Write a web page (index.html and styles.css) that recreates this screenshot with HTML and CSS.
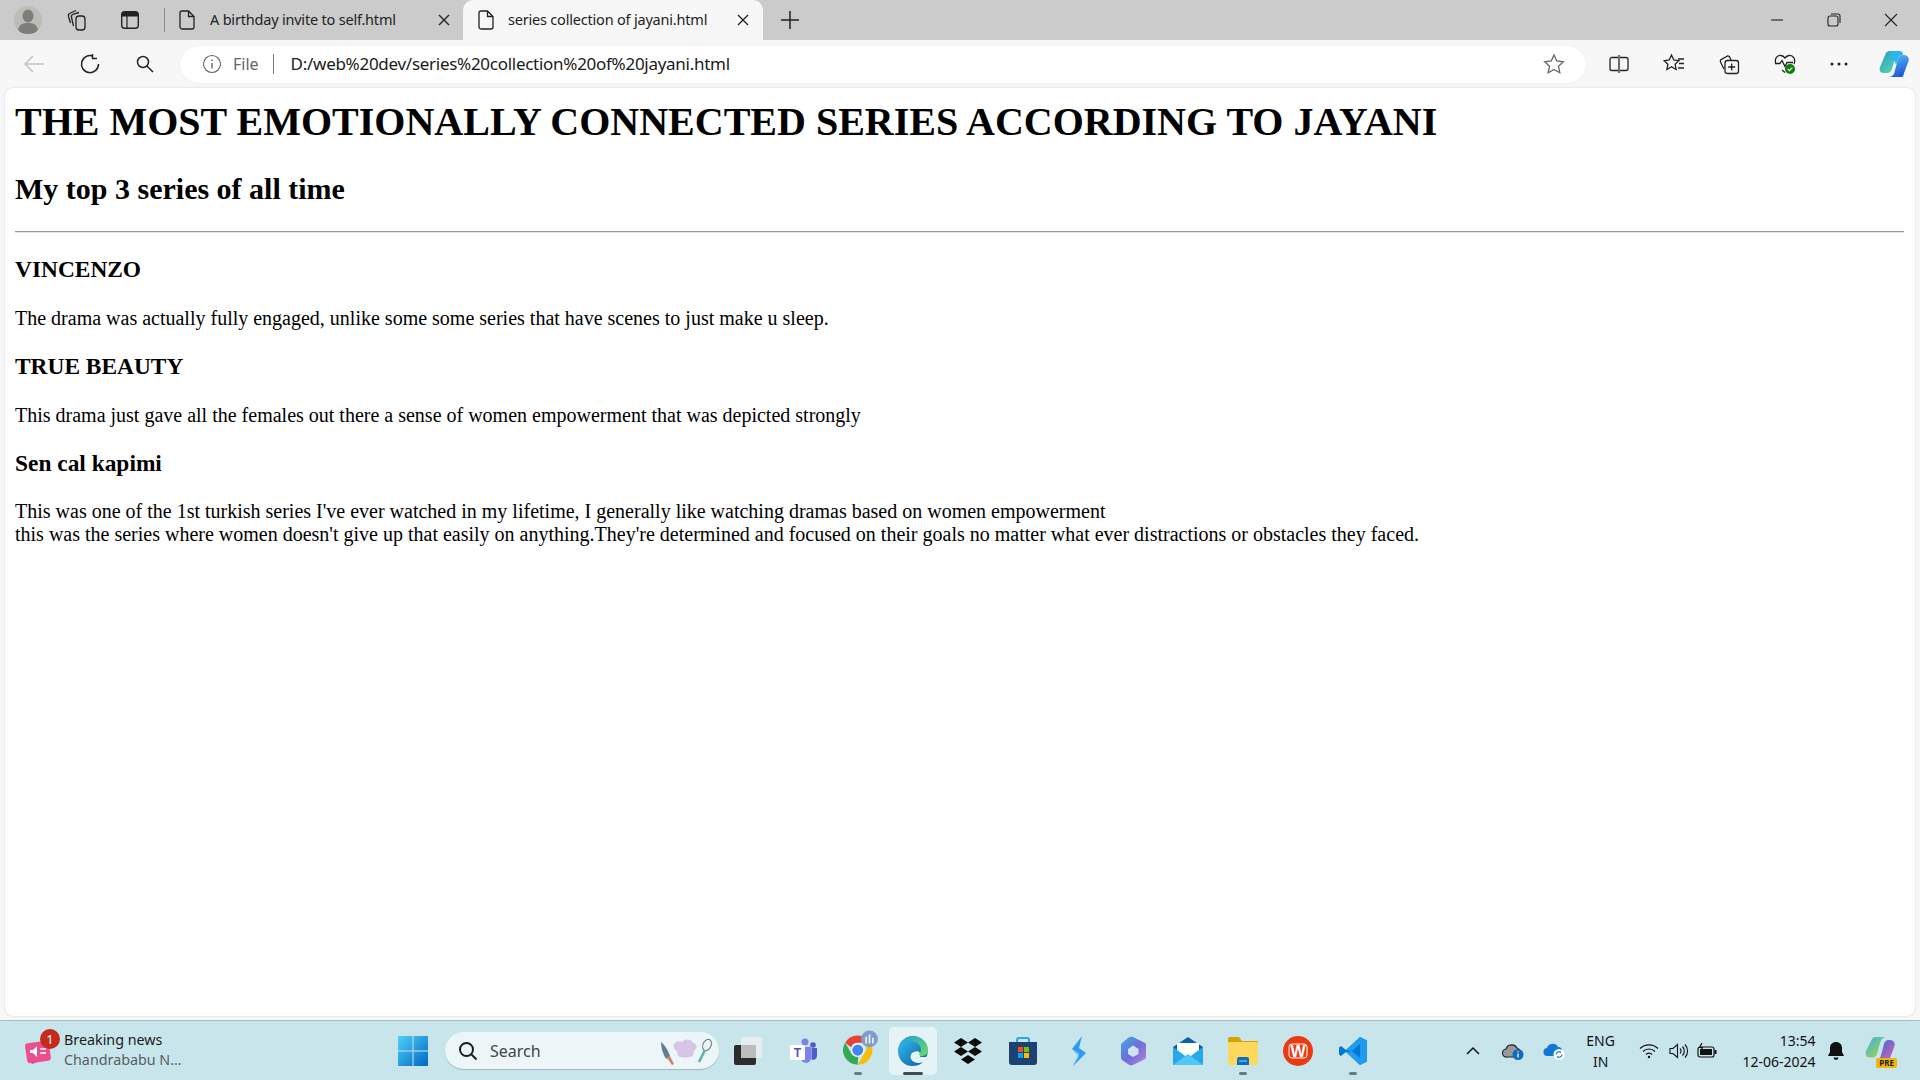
FILE: index.html
```html
<!DOCTYPE html>
<html lang="en">
<head>
<meta charset="utf-8">
<title>series collection of jayani.html</title>
<link rel="stylesheet" href="styles.css">
</head>
<body>
<div class="app">
  <header class="tabstrip">
    <svg class="ic profile" width="30" height="30" viewBox="0 0 30 30"><circle cx="15" cy="15" r="14" fill="#bdbdb8"/><ellipse cx="15" cy="11" rx="5.500" ry="6.500" fill="#7d7d7a"/><path d="M5 25c1-6 5-7 10-7s9 1 10 7c-3 3-6 4-10 4s-7-1-10-4z" fill="#7d7d7a"/></svg>
    <svg class="ic workspaces" width="22" height="22" viewBox="0 0 22 22" fill="none" stroke="#222" stroke-width="1.300"><rect x="10" y="7" width="9" height="14" rx="3"/><path d="M7.500 17 5.500 8.500C5 6.500 6 5.500 7.500 5L13 3.500M4.500 14 2.500 7.500C2 5.500 3 4.500 4.500 4L10 1.500"/></svg>
    <svg class="ic vtabs" width="20" height="20" viewBox="0 0 20 20"><rect x="1.700" y="1.700" width="16.600" height="16.600" rx="3" fill="none" stroke="#222" stroke-width="1.400"/><path d="M2 4a2 2 0 0 1 2-2h12a2 2 0 0 1 2 2v2.500H2z" fill="#222"/><path d="M7 6v12" stroke="#222" stroke-width="1.200"/></svg>
    <span class="divider"></span>
    <div class="tab">
      <svg class="ic" width="16" height="20" viewBox="0 0 16 20" fill="none" stroke="#222" stroke-width="1.300"><path d="M3 1h6.500L15 6.500V17a2 2 0 0 1-2 2H3a2 2 0 0 1-2-2V3a2 2 0 0 1 2-2zM9.500 1v5.500H15"/></svg>
      <span class="tab-title">A birthday invite to self.html</span>
      <svg class="ic" width="12" height="12" viewBox="0 0 12 12" stroke="#222" stroke-width="1.400"><path d="M1 1l10 10M11 1 1 11"/></svg>
    </div>
    <div class="tab active">
      <svg class="ic" width="16" height="20" viewBox="0 0 16 20" fill="none" stroke="#222" stroke-width="1.300"><path d="M3 1h6.500L15 6.500V17a2 2 0 0 1-2 2H3a2 2 0 0 1-2-2V3a2 2 0 0 1 2-2zM9.500 1v5.500H15"/></svg>
      <span class="tab-title">series collection of jayani.html</span>
      <svg class="ic" width="12" height="12" viewBox="0 0 12 12" stroke="#222" stroke-width="1.400"><path d="M1 1l10 10M11 1 1 11"/></svg>
    </div>
    <svg class="ic newtab" width="20" height="20" viewBox="0 0 20 20" stroke="#222" stroke-width="1.500"><path d="M10 1v18M1 10h18"/></svg>
    <div class="winctl">
      <svg class="ic" width="14" height="14" viewBox="0 0 14 14" stroke="#222" stroke-width="1.100"><path d="M1 7h12"/></svg>
      <svg class="ic" width="14" height="14" viewBox="0 0 14 14" fill="none" stroke="#222" stroke-width="1.100"><rect x="1" y="3" width="10" height="10" rx="2"/><path d="M4 1h7a2 2 0 0 1 2 2v7"/></svg>
      <svg class="ic" width="14" height="14" viewBox="0 0 14 14" stroke="#222" stroke-width="1.100"><path d="M1 1l12 12M13 1 1 13"/></svg>
    </div>
  </header>

  <nav class="toolbar">
    <svg class="ic back" width="22" height="20" viewBox="0 0 22 20" fill="none" stroke="#c3c3c3" stroke-width="1.500"><path d="M21 10H2M10 2l-8 8 8 8"/></svg>
    <svg class="ic reload" width="22" height="22" viewBox="0 0 22 22" fill="none" stroke="#222" stroke-width="1.500"><path d="M14 3.200A8.500 8.500 0 1 0 19.500 11M13.500 1v4.500H18"/></svg>
    <svg class="ic zoomglass" width="18" height="18" viewBox="0 0 18 18" fill="none" stroke="#222" stroke-width="1.500"><circle cx="7" cy="7" r="5.500"/><path d="m11 11 6 6"/></svg>
    <div class="address">
      <svg class="ic" width="20" height="20" viewBox="0 0 20 20" fill="none" stroke="#666" stroke-width="1.100"><circle cx="10" cy="10" r="8.500"/><path d="M10 9v5.500M10 5.500v1.500" stroke-width="1.400"/></svg>
      <span class="file-label">File</span>
      <span class="addr-sep"></span>
      <span class="url">D:/web%20dev/series%20collection%20of%20jayani.html</span>
      <svg class="ic star" width="22" height="22" viewBox="0 0 22 22" fill="none" stroke="#666" stroke-width="1.300"><path d="m11 2 2.800 6 6.500.8-4.800 4.500 1.300 6.500L11 16.500 5.200 19.800l1.300-6.500L1.700 8.800 8.200 8z"/></svg>
    </div>
    <div class="tools">
      <svg class="ic" width="20" height="20" viewBox="0 0 20 20" fill="none" stroke="#222" stroke-width="1.300"><path d="M9 3.500H3a2 2 0 0 0-2 2v9a2 2 0 0 0 2 2h6M11 3.500h6a2 2 0 0 1 2 2v9a2 2 0 0 1-2 2h-6M10 1v18"/></svg>
      <svg class="ic" width="22" height="22" viewBox="0 0 22 22" fill="none" stroke="#222" stroke-width="1.300"><path d="m8.500 2 2.300 5 5 .7-3.700 3.500 1 5.300-4.600-2.700L3.900 16.500l1-5.300L1.200 7.700l5-.7zM15 6h6M16 10.500h5M15 15h6"/></svg>
      <svg class="ic" width="22" height="22" viewBox="0 0 22 22" fill="none" stroke="#222" stroke-width="1.300"><path d="M6 16 2.500 9a2 2 0 0 1 1-2.700L9 3.200a2 2 0 0 1 2.700.9L13 7"/><rect x="7" y="7.500" width="13.500" height="13" rx="2.500"/><path d="M13.700 10.500v7M10.200 14h7"/></svg>
      <svg class="ic" width="24" height="22" viewBox="0 0 24 22"><path d="M12 19.500 9 17M3 11C1 6 4 2 8 2.500c2 .2 3 1.200 4 2.500 1-1.300 2-2.300 4-2.500 4-.5 7 3.500 5 8.500M2 10.500h5l2-3 3 6 2-4h6" fill="none" stroke="#222" stroke-width="1.300"/><circle cx="17" cy="16" r="5" fill="#107c10"/><path d="m14.800 16 1.600 1.600 2.900-3" fill="none" stroke="#fff" stroke-width="1.200"/></svg>
      <svg class="ic" width="18" height="6" viewBox="0 0 18 6" fill="#222"><circle cx="2" cy="3" r="1.500"/><circle cx="9" cy="3" r="1.500"/><circle cx="16" cy="3" r="1.500"/></svg>
      <svg class="ic" width="30" height="28" viewBox="0 0 30 28"><defs><linearGradient id="cpa" x1="0" y1="0" x2=".8" y2="1"><stop offset="0" stop-color="#1c9ad6"/><stop offset="1" stop-color="#5fdca0"/></linearGradient><linearGradient id="cpb" x1="0" y1="0" x2=".4" y2="1"><stop offset="0" stop-color="#5cc6f6"/><stop offset="1" stop-color="#1f58d8"/></linearGradient></defs><path d="M7 3c1-1.500 2.500-2 5-2h9c-3 1-4 3-5 7l-3 11c-.7 2.500-2.500 4-5 4H4.500C1 23 0 20 1 17z" fill="url(#cpa)"/><path d="M23 27H11c3-1 4.500-3 5-7l3-11c.6-2 2-4 5-4 4 0 6.500 2 5.500 6L25 23c-.5 2.500-1 4-2 4z" fill="url(#cpb)"/><path d="M12 1h9c1.500 0 3 1.500 3 4-3 0-4.500 1.500-5 4l-2 6c-.5-3-2-5.500-4-5.500-1.500 0-2-.5-1.500-2z" fill="#31b3ee"/></svg>
    </div>
  </nav>

  <main class="page">
    <h1>THE MOST EMOTIONALLY CONNECTED SERIES ACCORDING TO JAYANI</h1>
    <h2>My top 3 series of all time</h2>
    <hr>
    <h3>VINCENZO</h3>
    <p>The drama was actually fully engaged, unlike some some series that have scenes to just make u sleep.</p>
    <h3>TRUE BEAUTY</h3>
    <p>This drama just gave all the females out there a sense of women empowerment that was depicted strongly</p>
    <h3>Sen cal kapimi</h3>
    <p>This was one of the 1st turkish series I've ever watched in my lifetime, I generally like watching dramas based on women empowerment<br>this was the series where women doesn't give up that easily on anything.They're determined and focused on their goals no matter what ever distractions or obstacles they faced.</p>
  </main>

  <footer class="taskbar">
    <div class="news">
      <div class="news-icon">
        <svg width="28" height="30" viewBox="0 0 28 30"><path d="M3 14 20 8l4 14-16 6z" fill="#7a4fd6"/><rect x="2" y="6" width="24" height="20" rx="3" fill="#ec4f8d" transform="rotate(-8 14 16)"/><path d="M6 14h3l4-4v11l-4-4H6z" fill="#fff"/><path d="M16 13h6M16 17h6" stroke="#fff" stroke-width="1.600"/></svg>
        <span class="badge">1</span>
      </div>
      <div class="news-text">
        <span class="news-title">Breaking news</span>
        <span class="news-sub">Chandrababu N...</span>
      </div>
    </div>
    <svg class="ic start" width="30" height="30" viewBox="0 0 30 30"><defs><linearGradient id="win" x1="0" y1="0" x2="1" y2="1"><stop offset="0" stop-color="#4fd0fb"/><stop offset="1" stop-color="#0067c0"/></linearGradient></defs><path d="M0 0h14.500v14.500H0zM15.500 0H30v14.500H15.500zM0 15.500h14.500V30H0zM15.500 15.500H30V30H15.500z" fill="url(#win)"/></svg>
    <div class="search">
      <svg class="ic" width="20" height="20" viewBox="0 0 20 20" fill="none" stroke="#1c1c1c" stroke-width="2"><circle cx="8.500" cy="8.500" r="6.500"/><path d="m13.500 13.500 5 5"/></svg>
      <span class="search-label">Search</span>
      <svg class="ic search-art" width="54" height="30" viewBox="0 0 54 30"><path d="M2 6c3 2 7 8 9 14l-4 3C4 18 2 12 2 6z" fill="#5e7f92"/><path d="m8 22 3-2 4 8-2 1z" fill="#c9875a"/><path d="M15 12c-2-6 5-8 8-6 3-4 10-3 11 1 4 0 5 6 1 8l-1 5c-5 2-11 2-15 0l-1-5c-1 0-2-1-3-3z" fill="#d6c6e6"/><ellipse cx="48" cy="9" rx="4" ry="6" transform="rotate(25 48 9)" fill="#eef4f6" stroke="#6a7a80"/><path d="m46 14-6 12" stroke="#57b3a0" stroke-width="2.500"/></svg>
    </div>
    <div class="apps">
      <div class="app-slot">
        <svg width="30" height="30" viewBox="0 0 30 30"><rect x="1" y="9" width="22" height="20" rx="2" fill="#2b2b2b"/><rect x="8" y="1" width="21" height="21" rx="2" fill="#e9eef0" fill-opacity=".9"/><rect x="8" y="9" width="15" height="13" fill="#bcbcbc"/></svg>
        <span class="run none"></span>
      </div>
      <div class="app-slot">
        <svg width="30" height="30" viewBox="0 0 30 30"><circle cx="17" cy="6" r="3.500" fill="#7b83eb"/><circle cx="25" cy="9" r="2.800" fill="#5059c9"/><path d="M13 11h10v11a5 5 0 0 1-10 0z" fill="#7b83eb"/><path d="M23.500 12H29v8a4 4 0 0 1-5.500 3.500z" fill="#5059c9"/><rect x="2" y="9" width="15" height="15" fill="#fff"/><text x="9.500" y="21" class="teams-t">T</text></svg>
        <span class="run none"></span>
      </div>
      <div class="app-slot">
        <svg class="chrome" width="38" height="38" viewBox="0 0 34 34"><path d="M15 5a13 13 0 0 1 11.300 6.500H15a6.500 6.500 0 0 0-6 4L3.700 11.300A13 13 0 0 1 15 5z" fill="#ea4335"/><path d="M26.300 11.500A13 13 0 0 1 15 31l5.600-9.700a6.500 6.500 0 0 0 .4-9.800z" fill="#fbbc04"/><path d="M15 31A13 13 0 0 1 3.700 11.300L9.300 21a6.500 6.500 0 0 0 6 3z" fill="#34a853"/><circle cx="15" cy="18" r="5.500" fill="#4285f4" stroke="#fff"/><circle cx="25.500" cy="8" r="7.500" fill="#7e9ec9"/><path d="M22.500 12V6M25.500 12V4M28.500 12V7" stroke="#e9f0f8" stroke-width="1.500"/></svg>
        <span class="run"></span>
      </div>
      <div class="app-slot current">
        <svg width="32" height="32" viewBox="0 0 32 32"><defs><linearGradient id="edg" x1="0" y1="0" x2="1" y2="1"><stop offset="0" stop-color="#35c1f1"/><stop offset="1" stop-color="#0c59a4"/></linearGradient><linearGradient id="edg2" x1="0" y1="0" x2="1" y2="1"><stop offset="0" stop-color="#1b9de2"/><stop offset="1" stop-color="#6ee05a"/></linearGradient></defs><path d="M16 1C7 1 1 8 1 16c0 9 7 15 14 15 4 0 8-1 11-4-4 2-10 1-12-3-1-3 0-6 3-7 2-1 5-1 6 1 1 1 1 3 0 4h6c2-2 2-5 1-9C28 6 22 1 16 1z" fill="url(#edg)"/><path d="M16 1c-6 0-11 4-13 9 3-4 8-5 12-4 5 1 9 4 9 9 0 2-1 3-2 4 0 1 1 2 3 2 4 0 6-3 6-6C31 7 24 1 16 1z" fill="url(#edg2)"/></svg>
        <span class="run wide"></span>
      </div>
      <div class="app-slot">
        <svg width="30" height="30" viewBox="0 0 30 30" fill="#0a0a0a"><path d="M8 2 15 6.500 8 11 1 6.500zM22 2l7 4.500L22 11l-7-4.500zM8 11l7 4.500L8 20l-7-4.500zM22 11l7 4.500L22 20l-7-4.500zM15 19l7 4.500-7 4.500-7-4.500z"/></svg>
        <span class="run none"></span>
      </div>
      <div class="app-slot">
        <svg width="30" height="30" viewBox="0 0 30 30"><path d="M9 6V4a2 2 0 0 1 2-2h8a2 2 0 0 1 2 2v2" fill="none" stroke="#2aa6e0" stroke-width="2"/><path d="M1 6h28v20a3 3 0 0 1-3 3H4a3 3 0 0 1-3-3z" fill="#1c4272"/><rect x="10" y="11" width="5" height="5" fill="#f25022"/><rect x="16" y="11" width="5" height="5" fill="#7fba00"/><rect x="10" y="17" width="5" height="5" fill="#00a4ef"/><rect x="16" y="17" width="5" height="5" fill="#ffb900"/></svg>
        <span class="run none"></span>
      </div>
      <div class="app-slot">
        <svg width="30" height="32" viewBox="0 0 30 32"><path d="M19 1 9 14l7 5-6 12 13-13-7-5z" fill="#2f9bf0"/><path d="m9 14 7 5-6 12 6-9z" fill="#73c7f7"/></svg>
        <span class="run none"></span>
      </div>
      <div class="app-slot">
        <svg width="30" height="32" viewBox="0 0 30 32"><defs><linearGradient id="m3" x1="0" y1="0" x2="1" y2="1"><stop offset="0" stop-color="#3fa9e8"/><stop offset=".5" stop-color="#6d6fd8"/><stop offset="1" stop-color="#c37fdb"/></linearGradient></defs><path d="M15 2 27 8c1 .5 1 1 1 2v12c0 1 0 1.500-1 2l-12 6c-2 1-4 0-5-1l-6-4c-1-1-1-1.500-1-2.500V10c0-1 0-1.500 1-2l6-5c2-1.500 3.500-1.500 5-1z" fill="url(#m3)"/><path d="M15 10.500 20.500 14v5L15 22l-5-3v-5z" fill="#cfe3f6"/></svg>
        <span class="run none"></span>
      </div>
      <div class="app-slot">
        <svg width="32" height="30" viewBox="0 0 32 30"><path d="M16 1 31 11v18H1V11z" fill="#0f5fa8"/><path d="M5 7h22v14H5z" fill="#fff"/><path d="M1 11 16 22l15-11v18H1z" fill="#28a8ea"/><path d="M1 29 16 18l15 11z" fill="#50c8f5"/></svg>
        <span class="run none"></span>
      </div>
      <div class="app-slot">
        <svg width="32" height="30" viewBox="0 0 32 30"><path d="M1 3a2 2 0 0 1 2-2h9l3 4h15a1 1 0 0 1 1 1v3H1z" fill="#d9a300"/><rect x="1" y="6" width="30" height="23" rx="1.500" fill="#fcd95e"/><path d="M10 29v-6a2 2 0 0 1 2-2h8a2 2 0 0 1 2 2v6z" fill="#0f6cbd"/><path d="M12 25h8" stroke="#7fc4f2" stroke-width="1.200"/></svg>
        <span class="run"></span>
      </div>
      <div class="app-slot">
        <svg width="30" height="30" viewBox="0 0 30 30"><circle cx="15" cy="15" r="15" fill="#ea3a12"/><rect x="6" y="8" width="18" height="14" rx="3" fill="#ea3a12" stroke="#fff" stroke-width="1"/><text x="15" y="21" class="wps-w">W</text></svg>
        <span class="run none"></span>
      </div>
      <div class="app-slot">
        <svg width="30" height="30" viewBox="0 0 30 30"><path d="M22 1 29 4.500v21L22 29 8 16l-5 4-2-1.500V11.500L3 10l5 4z" fill="#0078d4"/><path d="M22 1 8 14l6 1 8-7v14l-8-7-6 1 14 13 7-3.500v-21z" fill="#1f9cf0"/></svg>
        <span class="run"></span>
      </div>
    </div>
    <div class="tray">
      <svg class="ic chevron" width="14" height="9" viewBox="0 0 14 9" fill="none" stroke="#111" stroke-width="1.500"><path d="m1 8 6-6 6 6"/></svg>
      <svg class="ic cloud" width="22" height="18" viewBox="0 0 22 18"><path d="M5 15a4 4 0 0 1-1-8 6 6 0 0 1 11-1 4 4 0 0 1 3 3v6z" fill="#9a9a9a" stroke="#222" stroke-width="1.200"/><circle cx="16" cy="12.500" r="5.500" fill="#0f6cbd"/><path d="M16 11.500V15.500M16 9.300v1" stroke="#fff" stroke-width="1.300"/></svg>
      <svg class="ic onedrive" width="22" height="18" viewBox="0 0 22 18"><path d="M5 14a4 4 0 0 1-1-8 6 6 0 0 1 11-1 4 4 0 0 1 4 4v5z" fill="#0f78d4"/><circle cx="16" cy="12.500" r="5.500" fill="#fff"/><path d="M13 12.500a3 3 0 0 1 5-2M19 12.500a3 3 0 0 1-5 2" fill="none" stroke="#0f78d4" stroke-width="1.200"/></svg>
      <div class="lang"><span>ENG</span><span>IN</span></div>
      <svg class="ic wifi" width="20" height="16" viewBox="0 0 20 16" fill="none" stroke="#111" stroke-width="1.200"><path d="M1 5.500a13 13 0 0 1 18 0M4 8.500a8.500 8.500 0 0 1 12 0M7 11.500a4 4 0 0 1 6 0"/><circle cx="10" cy="14" r="1.200" fill="#111" stroke="none"/></svg>
      <svg class="ic volume" width="20" height="16" viewBox="0 0 20 16" fill="none" stroke="#111" stroke-width="1.100"><path d="M1 5.500h3L8.500 1.500v13L4 10.500H1zM11 5.500a3.500 3.500 0 0 1 0 5M13.500 3.500a6.500 6.500 0 0 1 0 9M16 1.500a9.500 9.500 0 0 1 0 13"/></svg>
      <svg class="ic battery" width="20" height="16" viewBox="0 0 20 16"><rect x="1" y="4" width="16" height="10" rx="2" fill="none" stroke="#111" stroke-width="1.200"/><rect x="3" y="6" width="12" height="6" fill="#111"/><rect x="17.500" y="7" width="2" height="4" fill="#111"/><path d="M5 0 2.500 4.500h3L4 8" fill="none" stroke="#111" stroke-width="1.200"/></svg>
      <div class="clock"><span>13:54</span><span>12-06-2024</span></div>
      <svg class="ic bell" width="18" height="20" viewBox="0 0 18 20" fill="#111"><path d="M9 1c-3.500 0-6 2.500-6 6v4l-2 4h16l-2-4V7c0-3.500-2.500-6-6-6z"/><path d="M6.500 16.500a2.500 2.500 0 0 0 5 0z"/></svg>
      <div class="copilot-pre">
        <svg width="30" height="26" viewBox="0 0 30 26"><defs><linearGradient id="cq" x1="0" y1="0" x2=".8" y2="1"><stop offset="0" stop-color="#36b5e8"/><stop offset="1" stop-color="#a3d14a"/></linearGradient><linearGradient id="cr" x1="0" y1="0" x2="1" y2="1"><stop offset="0" stop-color="#2a6fe0"/><stop offset="1" stop-color="#e35fae"/></linearGradient></defs><path d="M7 3c1-1.500 2.500-2 5-2h8c-3 1-4 3-5 6l-3 11c-.7 2-2.500 3.500-5 3.500H4.500C1 21.500 0 18 1 15z" fill="url(#cq)"/><path d="M23 25H11c3-1 4.500-3 5-6l3-11c.6-2 2-4 5-4 4 0 6.500 2 5.500 6L25 22c-.5 2-1 3-2 3z" fill="url(#cr)"/></svg>
        <span class="pre">PRE</span>
      </div>
    </div>
  </footer>
</div>
</body>
</html>
```
FILE: styles.css
```css
* { box-sizing: border-box; }
html, body { margin: 0; padding: 0; height: 100%; overflow: hidden; }
body { font-family: "Noto Sans", "Open Sans", sans-serif; color: #1a1a1a; }
.ic { display: block; flex: none; }
.app { width: 1920px; height: 1080px; display: flex; flex-direction: column; background: #f7f7f7; }

/* Tab strip */
.tabstrip { height: 40px; flex: none; display: flex; align-items: center; background: #cbcbcb; padding-left: 13px; }
.profile { margin-right: 23px; }
.workspaces { margin-right: 32px; }
.vtabs { margin-right: 24px; }
.divider { width: 1px; height: 24px; background: #8a8a8a; margin-right: 14px; }
.tab { width: 284px; height: 40px; display: flex; align-items: center; padding: 0 13px 0 0; border-radius: 10px 10px 0 0; }
.tab .ic:first-child { margin-left: 0; margin-right: 15px; }
.tab-title { font-size: 14.500px; flex: 1; white-space: nowrap; letter-spacing: -.2px; color: #222; padding-bottom: 2px; }
.tab.active { width: 300px; margin-left: 0; background: #f7f7f7; padding: 0 14px 0 15px; }
.tab.active .ic:first-child { margin-right: 14px; }
.newtab { margin-left: 17px; }
.winctl { margin-left: auto; display: flex; align-items: center; gap: 43px; padding-right: 22px; }

/* Toolbar */
.toolbar { height: 48px; flex: none; display: flex; align-items: center; background: #f7f7f7; padding-left: 23px; }
.back { margin-right: 34px; }
.reload { margin-right: 35px; }
.zoomglass { margin-right: 26px; }
.address { width: 1406px; height: 37px; display: flex; align-items: center; background: #fff; border-radius: 19px; padding: 0 21px 0 22px; box-shadow: 0 0 2px rgba(0,0,0,.08); }
.file-label { font-size: 16px; color: #666; margin-left: 11px; padding-bottom: 1px; }
.addr-sep { width: 1px; height: 20px; background: #777; margin: 0 16px 0 14px; }
.url { font-size: 17px; color: #1a1a1a; letter-spacing: -.28px; flex: 1; white-space: nowrap; padding: 0 0 2px 1px; }
.tools { display: flex; align-items: center; flex: 1; padding-left: 23px; gap: 33px; }
.tools .ic:nth-child(2) { margin-left: 1px; }
.tools .ic:last-child { margin-left: -2px; }

/* Page */
.page { flex: 1; min-height: 0; margin: 0 5px 4px 5px; padding: 0 11px 0 10px; background: #fff; color: #000; border-radius: 8px; box-shadow: 0 0 2px rgba(0,0,0,.18); font-family: "Liberation Serif", serif; overflow: hidden; }
.page h1 { font-size: 40px; margin: 10px 0 27px; }
.page h2 { font-size: 30px; margin: 0 0 25px; }
.page hr { margin: 0; border: 0; border-top: 1px solid #9a9a9a; border-bottom: 1px solid #e6e6e6; }
.page h3 { font-size: 23.400px; margin: 23.400px 0; }
.page p { font-size: 20px; margin: 0; }

/* Taskbar */
.taskbar { height: 60px; flex: none; display: flex; align-items: center; background: #c9e5ec; border-top: 1px solid #a9bcc3; padding-left: 24px; }
.news { display: flex; align-items: center; width: 374px; gap: 13px; }
.news-icon { position: relative; width: 27px; height: 30px; }
.badge { position: absolute; top: -7px; right: -9px; width: 20px; height: 20px; border-radius: 50%; background: #c42b1c; color: #fff; font-size: 13px; line-height: 20px; text-align: center; }
.news-text { display: flex; flex-direction: column; font-size: 14.300px; line-height: 20px; padding-bottom: 2px; }
.news-title { color: #1a1a1a; }
.news-sub { color: #555f63; }
.start { margin-right: 17px; }
.search { width: 274px; height: 37px; display: flex; align-items: center; padding: 0 6px 0 13px; background: #ecf6f9; border-radius: 19px; box-shadow: 0 1px 1px rgba(0,0,0,.2); }
.search-label { font-size: 16px; color: #444; margin-left: 12px; flex: 1; }
.apps { display: flex; align-items: center; margin-left: 1.500px; }
.app-slot { position: relative; width: 55px; height: 48px; display: flex; align-items: center; justify-content: center; border-radius: 5px; }
.app-slot.current { background: #e6f3f6; width: 48px; margin: 0 3.500px; }
.chrome { margin-left: 3px; margin-bottom: 3px; }
.run { position: absolute; bottom: 0; left: 50%; width: 8px; height: 3px; margin-left: -4px; border-radius: 2px; background: #6b7a80; }
.run.none { display: none; }
.run.wide { width: 20px; margin-left: -10px; background: #404a50; }
.teams-t { font-family: "Liberation Sans", sans-serif; font-weight: 700; font-size: 12px; fill: #4b53bc; text-anchor: middle; }
.wps-w { font-family: "Liberation Sans", sans-serif; font-weight: 700; font-size: 16px; fill: #fff; text-anchor: middle; }
.tray { display: flex; align-items: center; margin-left: auto; padding-right: 25px; color: #111; font-size: 14px; }
.chevron { margin-right: 22px; }
.cloud { margin-right: 19px; }
.onedrive { margin-right: 18.500px; }
.lang { display: flex; flex-direction: column; align-items: center; line-height: 21px; width: 34px; margin-right: 21px; }
.wifi { margin-right: 10.300px; }
.volume { margin-right: 8.500px; }
.battery { margin-right: 25px; }
.clock { display: flex; flex-direction: column; align-items: flex-end; line-height: 21px; margin-right: 11px; }
.bell { margin-right: 20.500px; }
.copilot-pre { position: relative; width: 30px; height: 30px; }
.pre { position: absolute; right: -2px; bottom: -2px; background: #f2b705; color: #1a1a1a; font-size: 8px; font-weight: 700; line-height: 10px; padding: 0 3px; border-radius: 2px; }
```
